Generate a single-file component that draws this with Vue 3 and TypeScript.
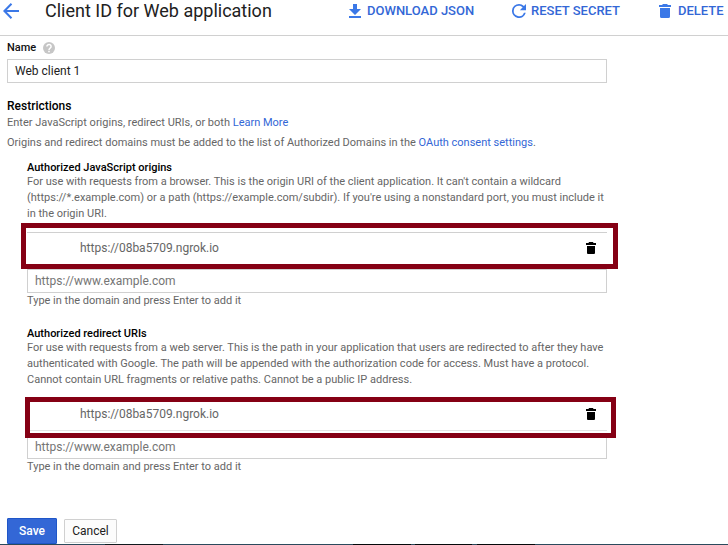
<script setup lang="ts">
interface UriSection {
  id: string
  title: string
  lines: string[]
  uri: string
}

const sections: UriSection[] = [
  {
    id: 'origins',
    title: 'Authorized JavaScript origins',
    lines: [
      "For use with requests from a browser. This is the origin URI of the client application. It can't contain a wildcard",
      "(https://*.example.com) or a path (https://example.com/subdir). If you're using a nonstandard port, you must include it",
      'in the origin URI.',
    ],
    uri: 'https://08ba5709.ngrok.io',
  },
  {
    id: 'redirects',
    title: 'Authorized redirect URIs',
    lines: [
      'For use with requests from a web server. This is the path in your application that users are redirected to after they have',
      'authenticated with Google. The path will be appended with the authorization code for access. Must have a protocol.',
      'Cannot contain URL fragments or relative paths. Cannot be a public IP address.',
    ],
    uri: 'https://08ba5709.ngrok.io',
  },
]
</script>

<template>
  <div class="page">
    <header class="toolbar">
      <svg class="back" viewBox="0 0 16 16"><path d="M16 8H1.5M8.500 0.700L1.400 8L8.500 15.300" fill="none" stroke="#3b78e7" stroke-width="2" /></svg>
      <h1>Client ID for Web application</h1>
      <a class="action download">
        <svg width="12" height="14" viewBox="0 0 12 14"><path d="M4 0h4v5h4l-6 6-6-6h4zM0 12h12v2H0z" /></svg>
        <span>DOWNLOAD JSON</span>
      </a>
      <a class="action reset">
        <svg width="14" height="14" viewBox="4 4 16 16"><path d="M17.65 6.35A7.958 7.958 0 0 0 12 4a8 8 0 1 0 7.73 10h-2.08A6 6 0 1 1 12 6c1.66 0 3.14.69 4.22 1.78L13 11h7V4z" /></svg>
        <span>RESET SECRET</span>
      </a>
      <a class="action delete">
        <svg width="12" height="14" viewBox="0 0 12 14"><path d="M4 0h4l1 1h3v2H0V1h3zM1 4h10v8.500a1.500 1.500 0 0 1-1.500 1.500h-7A1.500 1.500 0 0 1 1 12.500z" /></svg>
        <span>DELETE</span>
      </a>
    </header>

    <main>
      <div class="name-label">
        <span>Name</span>
        <svg width="12" height="12" viewBox="0 0 12 12">
          <circle cx="6" cy="6" r="6" fill="#c6c6c6" />
          <path d="M3.900 4.500a2.100 2 0 1 1 3.400 1.500C6.500 6.600 6 6.900 6 7.900" fill="none" stroke="#fff" stroke-width="1.500" />
          <path d="M5.200 8.700h1.600v1.500H5.200z" fill="#fff" />
        </svg>
      </div>
      <div class="field name-field">Web client 1</div>

      <h2>Restrictions</h2>
      <p class="intro">Enter JavaScript origins, redirect URIs, or both <a>Learn More</a></p>
      <p class="domains">Origins and redirect domains must be added to the list of Authorized Domains in the <a>OAuth consent settings</a>.</p>

      <section v-for="s in sections" :key="s.id" :class="s.id">
        <h3>{{ s.title }}</h3>
        <p v-for="(line, i) in s.lines" :key="i" class="desc">{{ line }}</p>
        <div class="entry">
          <span>{{ s.uri }}</span>
          <svg width="10" height="12" viewBox="0 0 10 12"><path d="M3 0h4l.5 1H10v2H0V1h2.500zM1 4h8v7a1 1 0 0 1-1 1H2a1 1 0 0 1-1-1z" /></svg>
          <div class="highlight"></div>
        </div>
        <div class="field placeholder">https://www.example.com</div>
        <p class="hint">Type in the domain and press Enter to add it</p>
      </section>

      <div class="buttons">
        <button class="save">Save</button>
        <button class="cancel">Cancel</button>
      </div>
    </main>
    <footer class="strip"></footer>
  </div>
</template>

<style>
body { margin: 0; background: #fff; overflow: hidden; }
</style>

<style scoped>
.page {
  width: 728px;
  height: 545px;
  box-sizing: border-box;
  overflow: hidden;
  display: flex;
  flex-direction: column;
  font-family: Roboto, "Liberation Sans", sans-serif;
  font-size: 11px;
  color: #666;
}
h1, h2, h3, p { margin: 0; font-weight: 400; white-space: nowrap; }
.toolbar {
  display: flex;
  height: 35px;
  flex: none;
  border-bottom: 1px solid #d0d0d0;
  color: #3367d6;
}
.back { width: 16px; height: 16px; margin: 3px 0 0 3px; flex: none; }
h1 {
  width: 302px;
  margin-left: 26px;
  font-size: 18px;
  line-height: 22px;
  color: #212121;
  flex: none;
}
.action {
  display: flex;
  height: 22px;
  align-items: center;
  flex: none;
  font-size: 13px;
  line-height: 20px;
  font-weight: 500;
  white-space: nowrap;
}
.action svg { fill: #3b78e7; flex: none; }
.download { width: 163px; gap: 6px; margin-left: 2px; }
.reset { width: 147px; gap: 5px; }
.delete { gap: 7px; }
main { flex: 1; min-height: 0; padding-left: 7px; width: 600px; }
.name-label {
  display: flex;
  align-items: center;
  gap: 7px;
  height: 23px;
  color: #111;
  font-weight: 500;
}
.field {
  box-sizing: border-box;
  height: 24px;
  border: 1px solid #d0d0d0;
  padding-left: 7px;
  font-size: 12px;
  line-height: 22px;
}
.name-field { color: #212121; }
h2 {
  margin-top: 15px;
  font-size: 12px;
  font-weight: 500;
  line-height: 16px;
  color: #000;
}
.intro { line-height: 16px; padding-top: 1px; }
.domains { line-height: 16px; margin-top: 4px; }
a { color: #3367d6; }
section { padding-left: 20px; }
.origins { margin-top: 10px; }
h3 { height: 13px; color: #000; font-size: 11px; font-weight: 500; line-height: 14px; }
.desc { height: 16px; line-height: 16px; }
.entry {
  position: relative;
  box-sizing: border-box;
  height: 37px;
  margin-top: 10px;
  border-top: 1px solid #d0d0d0;
  padding: 0 11px 7px 53px;
  display: flex;
  align-items: center;
  justify-content: space-between;
  font-size: 12px;
}
.entry svg { fill: #000; }
.highlight {
  position: absolute;
  box-sizing: border-box;
  border: 5px solid #850014;
  left: -6px;
  top: -10px;
  width: 597px;
  height: 46px;
}
.redirects .highlight { left: -2px; top: -2px; width: 591px; height: 41px; }
.placeholder { color: #757575; }
.hint { line-height: 16px; }
.redirects { margin-top: 18px; }
.redirects .entry {
  height: 33px;
  margin-bottom: 4px;
  padding-bottom: 1px;
  border-bottom: 1px solid #e4e4e4;
}
.buttons { display: flex; align-items: center; gap: 7px; height: 26px; margin-top: 43px; }
button {
  box-sizing: border-box;
  padding: 0;
  border-radius: 1px;
  font-family: inherit;
  font-size: 12px;
}
.save {
  width: 50px;
  height: 26px;
  border: 1px solid #1f56c8;
  background: #3367d6;
  color: #fff;
  font-weight: 500;
}
.cancel {
  width: 53px;
  height: 24px;
  border: 1px solid #d0d0d0;
  background: #fcfcfc;
  color: #212121;
}
.strip {
  height: 1px;
  flex: none;
  background: linear-gradient(90deg, #2b4a5c 105px, #10191d 105px 163px, #2b4a5c 163px 353px, #05080a 353px 411px, #2b4a5c 411px 415px, #05080a 415px 472px, #2b4a5c 472px 477px, #05080a 477px 535px, #2b4a5c 535px);
}
</style>
